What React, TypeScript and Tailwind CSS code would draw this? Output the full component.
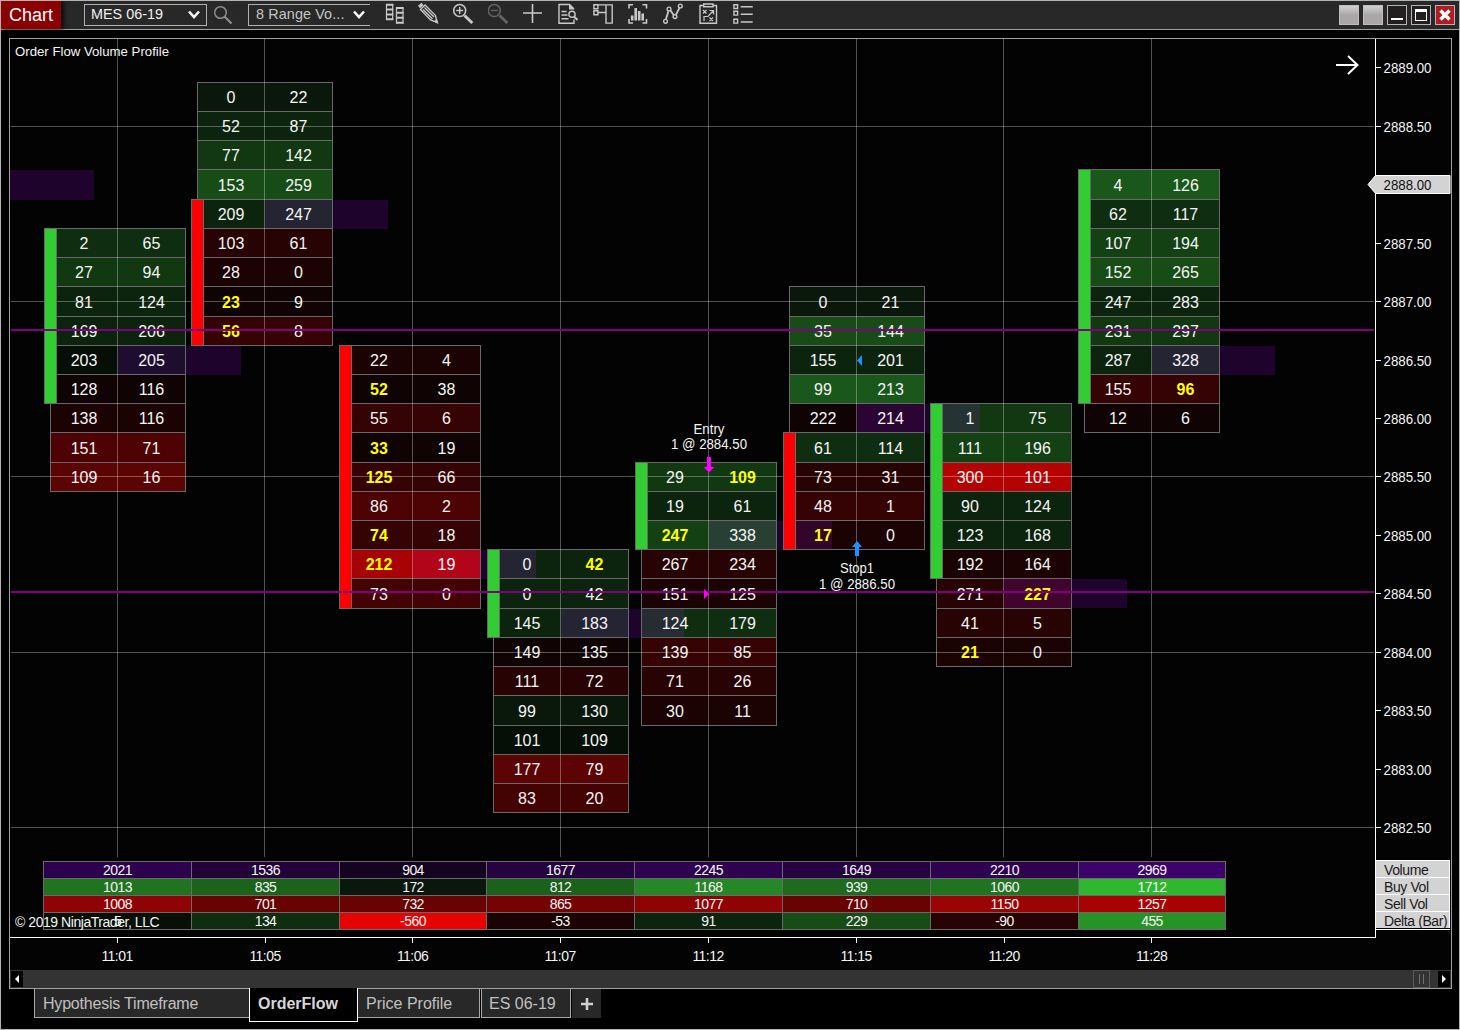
import React from "react";
import clsx from "clsx";

type Flag = "bid" | "ask";
type Row = [bid: number, ask: number, flag?: Flag];

interface Bar {
  time: string;
  x: number;
  start: number; // index of the top price row
  body: [from: number, to: number, up: boolean];
  poc: number;
  pocFill: string;
  rows: Row[];
}

const BARS: Bar[] = [
  {
    time: "11:01", x: 117, start: 5, body: [5, 11, true], poc: 9, pocFill: "#1e0d2e",
    rows: [[2, 65], [27, 94], [81, 124], [169, 206], [203, 205], [128, 116], [138, 116], [151, 71], [109, 16]],
  },
  {
    time: "11:05", x: 264, start: 0, body: [4, 9, false], poc: 4, pocFill: "#242433",
    rows: [[0, 22], [52, 87], [77, 142], [153, 259], [209, 247], [103, 61], [28, 0], [23, 9, "bid"], [56, 8, "bid"]],
  },
  {
    time: "11:06", x: 412, start: 9, body: [9, 18, false], poc: 16, pocFill: "#b3051a",
    rows: [[22, 4], [52, 38, "bid"], [55, 6], [33, 19, "bid"], [125, 66, "bid"], [86, 2], [74, 18, "bid"], [212, 19, "bid"], [73, 0]],
  },
  {
    time: "11:07", x: 560, start: 16, body: [16, 19, true], poc: 18, pocFill: "#242433",
    rows: [[0, 42, "ask"], [0, 42], [145, 183], [149, 135], [111, 72], [99, 130], [101, 109], [177, 79], [83, 20]],
  },
  {
    time: "11:12", x: 708, start: 13, body: [13, 16, true], poc: 15, pocFill: "#284033",
    rows: [[29, 109, "ask"], [19, 61], [247, 338, "bid"], [267, 234], [151, 125], [124, 179], [139, 85], [71, 26], [30, 11]],
  },
  {
    time: "11:15", x: 856, start: 7, body: [12, 16, false], poc: 11, pocFill: "#2a0433",
    rows: [[0, 21], [35, 144], [155, 201], [99, 213], [222, 214], [61, 114], [73, 31], [48, 1], [17, 0, "bid"]],
  },
  {
    time: "11:20", x: 1003, start: 11, body: [11, 17, true], poc: 17, pocFill: "#40052c",
    rows: [[1, 75], [111, 196], [300, 101], [90, 124], [123, 168], [192, 164], [271, 227, "ask"], [41, 5], [21, 0, "bid"]],
  },
  {
    time: "11:28", x: 1151, start: 3, body: [3, 11, true], poc: 9, pocFill: "#242433",
    rows: [[4, 126], [62, 117], [107, 194], [152, 265], [247, 283], [231, 297], [287, 328], [155, 96, "ask"], [12, 6]],
  },
];

// Point-of-control bands that run on under the next bar
const OVERLAPS = [
  { from: 500, to: 536, row: 16, fill: "#242433" },
  { from: 642, to: 684, row: 18, fill: "#252d33" },
  { from: 796, to: 832, row: 15, fill: "#33052a" },
  { from: 943, to: 980, row: 11, fill: "#253433" },
];

const GREENS: [number, string][] = [
  [12, "#060f06"], [33, "#0a180b"], [50, "#0c230d"], [64, "#0f2d10"],
  [81, "#113811"], [98, "#144114"], [114, "#174c17"], [Infinity, "#1a571a"],
];
const REDS: [number, string][] = [
  [16, "#0f0303"], [30, "#1c0303"], [46, "#280303"], [60, "#350303"], [76, "#430303"],
  [90, "#4d0303"], [110, "#5c0303"], [195, "#a80304"], [Infinity, "#b50303"],
];

const cellFill = (bid: number, ask: number) => {
  const d = ask - bid;
  const scale = d >= 0 ? GREENS : REDS;
  return scale.find(([max]) => Math.abs(d) < max)![1];
};

const rowY = (i: number) => Math.round(81.85 + 29.213 * i);

const PRICES = Array.from({ length: 14 }, (_, i) => ({
  label: (2889 - i * 0.5).toFixed(2),
  y: Math.floor(67.9 + i * 58.43),
}));

const SUMMARY: [string, string][][] = [
  [["2021", "#2c024c"], ["1536", "#220239"], ["904", "#150420"], ["1677", "#250340"], ["2245", "#2f0250"], ["1649", "#240340"], ["2210", "#2f0250"], ["2969", "#3c036b"]],
  [["1013", "#207420"], ["835", "#1b631b"], ["172", "#0a180b"], ["812", "#1b601b"], ["1168", "#258725"], ["939", "#1e6a1e"], ["1060", "#207420"], ["1712", "#2fb82f"]],
  [["1008", "#8f0306"], ["701", "#680303"], ["732", "#680303"], ["865", "#750303"], ["1077", "#900305"], ["710", "#680303"], ["1150", "#9b0304"], ["1257", "#a80304"]],
  [["5", "#080f07"], ["134", "#0f2d10"], ["-560", "#e80303"], ["-53", "#1c0303"], ["91", "#0c230d"], ["229", "#174c17"], ["-90", "#280303"], ["455", "#259425"]],
];

const COLS = "grid grid-cols-[148px_148px_147px_148px_148px_148px_148px_147px]";

function FootprintBar({ bar }: { bar: Bar }) {
  const { x, start, rows } = bar;
  return (
    <g>
      {rows.map(([bid, ask], i) => {
        const y = rowY(start + i);
        const h = rowY(start + i + 1) - y;
        const isPoc = bar.poc === start + i;
        return (
          <g key={i} shapeRendering="crispEdges">
            <rect x={x - 67} y={y} width={136} height={h} fill={cellFill(bid, ask)} />
            {isPoc && <rect x={x + 1} y={y} width={68} height={h} fill={bar.pocFill} />}
          </g>
        );
      })}
      {OVERLAPS.filter((o) => o.from > x - 70 && o.to < x).map((o) => (
        <rect key={o.row} x={o.from} y={rowY(o.row)} width={o.to - o.from} height={29} fill={o.fill} />
      ))}
      <g stroke="#696969" fill="none" shapeRendering="crispEdges">
        {rows.slice(1).map((_, i) => (
          <line key={i} x1={x - 67} x2={x + 69} y1={rowY(start + i + 1) + 0.5} y2={rowY(start + i + 1) + 0.5} />
        ))}
        <rect x={x - 66.5} y={rowY(start) + 0.5} width={135} height={rowY(start + rows.length) - rowY(start)} />
      </g>
      {rows.map(([bid, ask, flag], i) => {
        const y = (rowY(start + i) + rowY(start + i + 1)) / 2 + 6.5;
        return (
          <g key={i} fontSize={16} textAnchor="middle" fill="#f5f5f5">
            <text x={x - 33} y={y} className={clsx(flag === "bid" && "fill-[#ffff00] font-bold")}>{bid}</text>
            <text x={x + 34.5} y={y} className={clsx(flag === "ask" && "fill-[#ffff00] font-bold")}>{ask}</text>
          </g>
        );
      })}
    </g>
  );
}

function CandleBody({ bar }: { bar: Bar }) {
  const [from, to, up] = bar.body;
  return (
    <rect
      x={bar.x - 72.5}
      y={rowY(from) + 0.5}
      width={12}
      height={rowY(to) - rowY(from)}
      fill={up ? "#32cd32" : "#ff0000"}
      stroke="#696969"
      shapeRendering="crispEdges"
    />
  );
}

function Plot() {
  return (
    <svg width={1441} height={822} viewBox="10 39 1441 822" className="block shrink-0">
      {/* POC bands */}
      <g fill="#1e032d" shapeRendering="crispEdges">
        <rect x={10} y={170} width={84} height={30} />
        {BARS.map((b) => (
          <rect key={b.time} x={b.x} y={rowY(b.poc) + 1} width={124} height={29} />
        ))}
      </g>

      {BARS.map((b) => (
        <FootprintBar key={b.time} bar={b} />
      ))}

      {/* Grid */}
      <g fill="#ffffff" fillOpacity={0.31} shapeRendering="crispEdges">
        {[126, 301, 476, 652, 827].map((y) => (
          <rect key={y} x={11} y={y} width={1363} height={1} />
        ))}
        {BARS.map((b) => (
          <rect key={b.time} x={b.x} y={39} width={1} height={818} />
        ))}
      </g>

      {BARS.map((b) => (
        <CandleBody key={b.time} bar={b} />
      ))}

      {/* Trade markers */}
      <g fontSize={14} textAnchor="middle" fill="#f5f5f5">
        <text x={709} y={434} textLength={31} lengthAdjust="spacingAndGlyphs">Entry</text>
        <text x={709} y={449} textLength={76} lengthAdjust="spacingAndGlyphs">1 @ 2884.50</text>
        <text x={857} y={573} textLength={34} lengthAdjust="spacingAndGlyphs">Stop1</text>
        <text x={857} y={589} textLength={76} lengthAdjust="spacingAndGlyphs">1 @ 2886.50</text>
      </g>
      <path d="M707 457h4v10h3.500l-5.500 5.500l-5.500-5.500h3.500z" fill="#ff00ff" />
      <path d="M855 556h4v-9h3l-5-6l-5 6h3z" fill="#1e90ff" />
      <path d="M862 355v11l-5-5.500z" fill="#1e90ff" />
      <g fill="#800080" shapeRendering="crispEdges">
        <rect x={11} y={329} width={1363} height={2} />
        <rect x={11} y={591} width={1363} height={2} />
      </g>
      <path d="M704 589v10l5-5z" fill="#ff00ff" />

      <text x={15} y={56} fontSize={13.5} fill="#f5f5f5" textLength={154} lengthAdjust="spacingAndGlyphs">
        Order Flow Volume Profile
      </text>
      <path d="M1336 65h21M1348 56l9.500 9l-9.500 9" stroke="#fff" strokeWidth={2} fill="none" />

      {/* Price axis */}
      <rect x={1375} y={39} width={1} height={822} fill="#fff" />
      <path d="M1368 184.500L1375.500 175.500H1450V193.500H1375.500Z" fill="#d3d3d3" stroke="#fff" />
      {PRICES.map((p) => (
        <g key={p.label}>
          {p.label !== "2888.00" && <rect x={1376} y={p.y} width={5} height={1} fill="#fff" shapeRendering="crispEdges" />}
          <text
            x={1383.500}
            y={p.y + 6}
            fontSize={14}
            textLength={48}
            lengthAdjust="spacingAndGlyphs"
            fill={p.label === "2888.00" ? "#111" : "#f5f5f5"}
          >
            {p.label}
          </text>
        </g>
      ))}
    </svg>
  );
}

function Icon({ children, className = "text-[#c8c8c8]" }: { children: React.ReactNode; className?: string }) {
  return (
    <svg
      width={24}
      height={24}
      viewBox="0 0 24 24"
      fill="none"
      stroke="currentColor"
      strokeWidth={1.4}
      className={clsx("shrink-0", className)}
    >
      {children}
    </svg>
  );
}

function Toolbar() {
  return (
    <div className="flex h-[29px] shrink-0 items-start border-b border-[#a0a0a0] bg-[#282828]">
      <div className="flex h-7 w-[60px] items-center justify-center bg-[#8b0000] text-[18px] text-white shadow-[2px_0_5px_#000]">Chart</div>
      <div className="mt-[3px] ml-[23px] flex h-[22px] w-[123px] items-center justify-between border border-[#b0b0b0] pr-[5px] pl-1.5 text-[14.4px] text-[#f0f0f0]">
        MES 06-19
        <Chevron />
      </div>
      <svg width={20} height={22} viewBox="0 0 20 22" className="mt-[3px] ml-[6px]" fill="none" stroke="#8c8c8c">
        <circle cx={7.500} cy={8.500} r={5.800} strokeWidth={1.5} />
        <path d="M11.500 12.500l7 7" strokeWidth={2.200} />
      </svg>
      <div className="mt-[3px] ml-[15px] flex h-[22px] w-[122px] items-center justify-between border border-r-0 border-[#b0b0b0] pr-[4px] pl-[7px] text-[14.4px] tracking-[0.1px] text-[#c4c4c4]">
        8 Range Vo...
        <Chevron />
      </div>
      <div className="mt-px ml-[13px] flex gap-[11px]">
        <Icon>
          <path d="M3.500 2v16M9.700 2v16M13.500 5.500v16M20 5.500v16" strokeWidth={1.2} />
          <path d="M3 2.700h7.300M3 7.500h7.300M3 12.500h7.300M3 17.300h7.300M13 6h7.600M13 10.700h7.600M13 15.700h7.600M13 20.700h7.600" strokeWidth={2} />
        </Icon>
        <Icon>
          <path d="M1 5l3.500-3" strokeWidth={3} />
          <path d="M2.500 7.500l4.500-4.500l10.500 10.500l1.500 7l-6.500-2.500zM5 7.500l9.500 9.500M6.500 5.500l9.500 9.500" />
          <path d="M15.500 19.500l3.500-2.500l1.500 5z" fill="currentColor" stroke="none" />
        </Icon>
        <Icon>
          <circle cx={6.700} cy={8.500} r={6} strokeWidth={1.6} />
          <path d="M6.700 5v7M3.200 8.500h7" />
          <path d="M11.500 13.500l7.800 7.500" strokeWidth={3} />
        </Icon>
        <Icon className="text-[#646464]">
          <circle cx={6.300} cy={8.500} r={6} strokeWidth={1.6} />
          <path d="M2.800 8.500h7" />
          <path d="M11.500 13.500l7.800 7.500" strokeWidth={3} />
        </Icon>
        <Icon>
          <path d="M0 11h19M9.500 2v19" strokeWidth={1.6} />
        </Icon>
        <Icon>
          <path d="M16 17.500v3.800H1V2.500h10.500l4.500 4.500M3.500 9.500h5M3.500 13h6M3.500 16.700h7" />
          <path d="M11 2l5.500 5.500h-5.500z" fill="currentColor" stroke="none" />
          <circle cx={14} cy={12.300} r={3.100} fill="#282828" />
          <path d="M16 14.500l3.500 3.500" strokeWidth={2} />
        </Icon>
        <Icon>
          <path d="M.9 2.700h4v4h-4zM.9 8.800h4v4h-4zM5 2.900h14.200v18.200h-6.200V2.900M5 10.500h8" />
        </Icon>
        <Icon>
          <path d="M1 6.500V2.700h4M14.500 2.700H18.500v3.800M18.500 17v4h-4M5 21H1v-4" strokeWidth={1.6} />
          <path d="M4.200 18.500v-5M7.700 18.500V6M11.200 18.500V9M14.700 18.500v-7" strokeWidth={2.6} />
        </Icon>
        <Icon>
          <path d="M2.900 17.200l2.500-8M7.500 8.500l3.200 4.500M13 12.500l3.500-6.700" strokeWidth={1.8} />
          <circle cx={2.500} cy={19.300} r={1.900} />
          <circle cx={6} cy={7} r={1.900} />
          <circle cx={12} cy={14.600} r={1.900} />
          <circle cx={17.300} cy={4} r={1.900} />
        </Icon>
        <Icon>
          <path d="M5 3.500H2v17.800h16.500V3.500h-3M5.700 2h9.300v2.700H5.700z" />
          <path d="M5 8l3.500 3.500M8.500 8L5 11.500M11.500 15.500l3.500 3.500M15 15.500l-3.500 3.500M6 19v-4.500h4l5-5.500M11.500 8.500h4v4" strokeWidth={1.2} />
        </Icon>
        <Icon>
          <path d="M.9 2.700h3.700v3.800H.9zM.9 9.300h3.700v3.800H.9zM.9 17.300h3.700v3.800H.9z" />
          <path d="M7.700 4.800h12M7.700 12.300h12M7.700 20h12" strokeWidth={1.6} />
        </Icon>
      </div>
      <div className="mt-1 mr-1 ml-auto flex gap-1">
        <div className="size-5 border border-[#bdbdbd] bg-linear-to-b from-[#d0d0d0] to-[#aaa6a8] to-50%" />
        <div className="size-5 border border-[#bdbdbd] bg-linear-to-b from-[#d0d0d0] to-[#aaa6a8] to-50%" />
        <div className="flex size-5 items-end justify-center border border-[#b4b4b4] bg-[#231f20] pb-1">
          <div className="h-0.5 w-3 bg-white" />
        </div>
        <div className="flex size-5 items-center justify-center border border-[#b4b4b4] bg-[#231f20]">
          <div className="h-3 w-3 border border-t-[3px] border-white" />
        </div>
        <div className="flex size-5 items-center justify-center border border-[#b4b4b4] bg-[#b01c22]">
          <svg width={12} height={12} viewBox="0 0 12 12">
            <path d="M1.500 1.500l9 9M10.500 1.500l-9 9" stroke="#fff" strokeWidth={3.400} />
          </svg>
        </div>
      </div>
    </div>
  );
}

function Chevron() {
  return (
    <svg width={14} height={10} viewBox="0 0 14 10" fill="none" stroke="#f5f5f5" strokeWidth={2.600}>
      <path d="M2 1.500l5 5.500l5-5.500" />
    </svg>
  );
}

function Summary() {
  return (
    <div className="flex h-[77px] shrink-0 text-[14px] leading-4">
      <div className="relative w-[1366px] border-r border-b border-white pl-[33px]">
        <div className="w-[1183px] border-r border-b border-[#696969]">
          {SUMMARY.map((row, i) => (
            <div key={i} className={COLS}>
              {row.map(([value, fill], j) => (
                <div
                  key={j}
                  className="h-[17px] border-t border-l border-[#696969] text-center tracking-[-0.55px] text-[#f5f5f5]"
                  style={{ backgroundColor: fill }}
                >
                  {value}
                </div>
              ))}
            </div>
          ))}
        </div>
        <div className="absolute top-[53px] left-[5px] tracking-[-0.45px] text-[#f5f5f5]">© 2019 NinjaTrader, LLC</div>
      </div>
      <div className="-mt-px h-[70px] w-[74px] border-b border-white">
        {["Volume", "Buy Vol", "Sell Vol", "Delta (Bar)"].map((label) => (
          <div key={label} className="h-[17px] border-t border-r border-white bg-[#d3d3d3] pt-px pl-2 tracking-[-0.4px] whitespace-nowrap text-[#1a1a1a]">
            {label}
          </div>
        ))}
      </div>
    </div>
  );
}

const TAB = "h-[29px] border-r border-b border-l border-[#a8a8a8] bg-[#282828] pt-[3px] pl-2";

export default function App() {
  return (
    <div className="flex h-[1030px] w-[1460px] flex-col overflow-hidden border border-[#b4b4b4] bg-black font-['Liberation_Sans',Arial,sans-serif]">
      <Toolbar />

      <div className="mt-2 ml-2 flex h-[951px] w-[1443px] shrink-0 flex-col border border-[#a0a0a0] bg-[#030303]">
        <Plot />
        <Summary />

        {/* Time axis */}
        <div className={clsx(COLS, "h-8 shrink-0 pl-[33px]")}>
          {BARS.map((b) => (
            <div key={b.time} className="flex flex-col items-center text-[14px] leading-4 tracking-[-0.55px] text-[#f5f5f5]">
              <div className="mb-[5px] h-[5px] w-px bg-white" />
              {b.time}
            </div>
          ))}
        </div>

        {/* Scrollbar */}
        <div className="flex flex-1 items-stretch bg-[#333]">
          <div className="my-px ml-px flex w-3 items-center justify-center bg-black">
            <div className="border-y-4 border-r-4 border-y-transparent border-r-white" />
          </div>
          <div className="mr-2 ml-auto flex w-[17px] items-center justify-center gap-[3px] border border-[#5c5c5c]">
            <div className="h-[10px] w-px bg-[#707070]" />
            <div className="h-[10px] w-px bg-[#707070]" />
          </div>
          <div className="my-px mr-px flex w-3 items-center justify-center bg-black">
            <div className="border-y-4 border-l-4 border-y-transparent border-l-white" />
          </div>
        </div>
      </div>

      {/* Workspace tabs */}
      <div className="flex items-start pl-[33px] text-[16px] leading-6 text-[#c0c0c0]">
        <div className={clsx(TAB, "w-[215px] border-r-0 tracking-[-0.2px]")}>Hypothesis Timeframe</div>
        <div className="-mt-px h-[34px] w-[109px] border-r border-b border-l border-white bg-black pt-1 pl-2 font-bold text-[#d6d6d6]">OrderFlow</div>
        <div className={clsx(TAB, "w-[122px] border-l-0")}>Price Profile</div>
        <div className={clsx(TAB, "ml-px w-[90px] pl-[7px]")}>ES 06-19</div>
        <div className="ml-px flex h-[29px] w-[29px] items-center justify-center bg-[#282828]">
          <svg width={14} height={14} viewBox="0 0 14 14">
            <path d="M7 1v12M1 7h12" stroke="#d0d0d0" strokeWidth={2.600} />
          </svg>
        </div>
      </div>
    </div>
  );
}
